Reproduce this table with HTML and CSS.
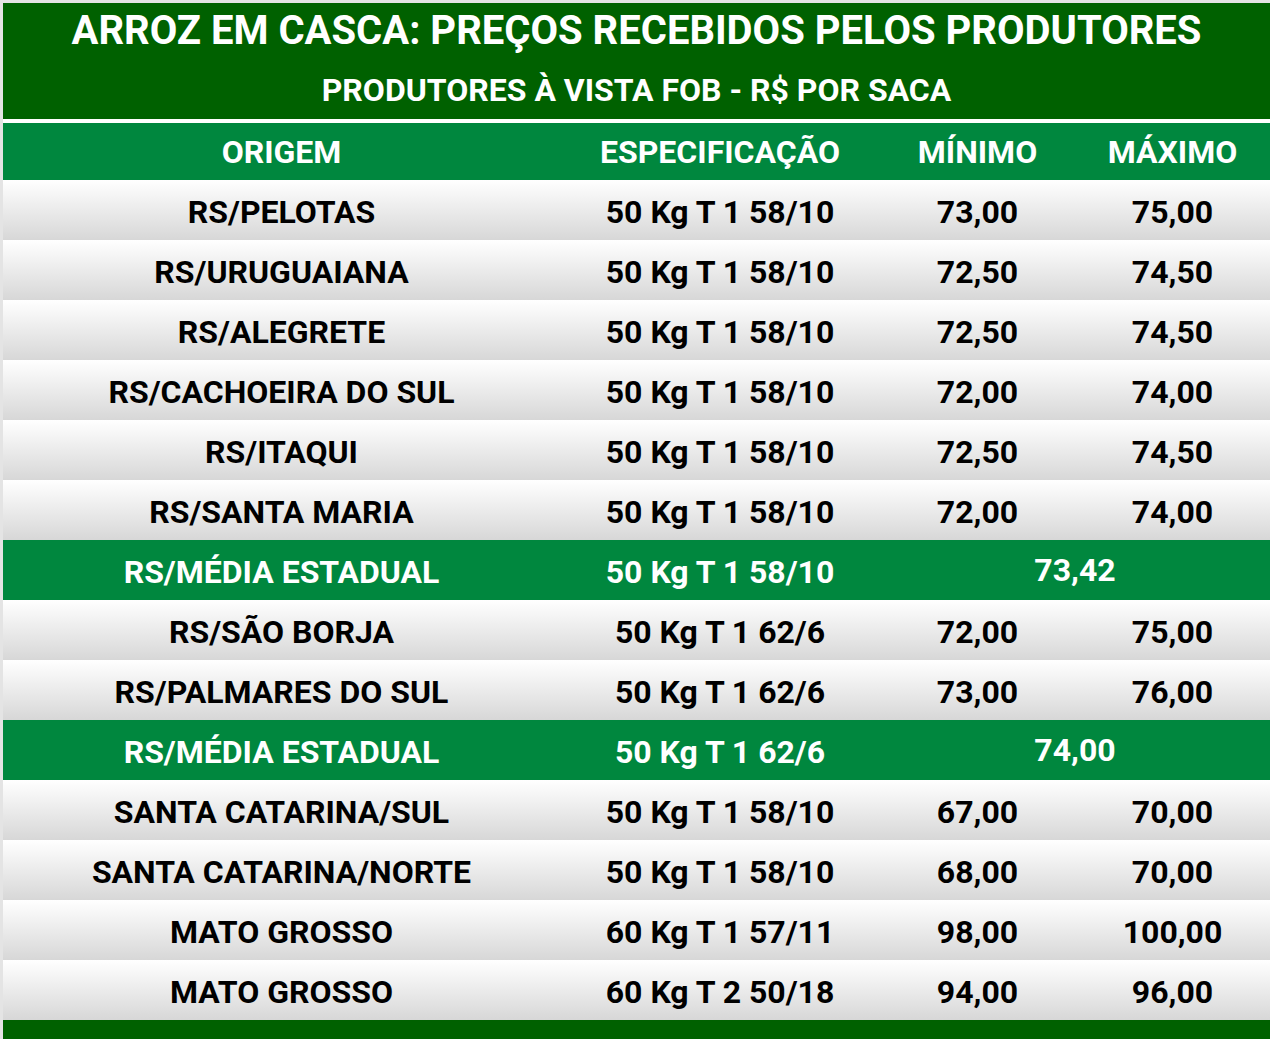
FILE: index.html
```html
<!DOCTYPE html>
<html lang="pt-BR">
<head>
<meta charset="utf-8">
<title>Arroz em casca: preços recebidos pelos produtores</title>
<link rel="stylesheet" href="styles.css">
</head>
<body>
<div class="sheet">
  <header class="banner">
    <h1 class="title">ARROZ EM CASCA: PREÇOS RECEBIDOS PELOS PRODUTORES</h1>
    <p class="subtitle">PRODUTORES À VISTA FOB - R$ POR SACA</p>
  </header>
  <div class="grid">
    <div class="cell head">ORIGEM</div>
    <div class="cell head">ESPECIFICAÇÃO</div>
    <div class="cell head">MÍNIMO</div>
    <div class="cell head">MÁXIMO</div>

    <div class="row"><div class="cell">RS/PELOTAS</div><div class="cell">50 Kg T 1 58/10</div><div class="cell">73,00</div><div class="cell">75,00</div></div>
    <div class="row"><div class="cell">RS/URUGUAIANA</div><div class="cell">50 Kg T 1 58/10</div><div class="cell">72,50</div><div class="cell">74,50</div></div>
    <div class="row"><div class="cell">RS/ALEGRETE</div><div class="cell">50 Kg T 1 58/10</div><div class="cell">72,50</div><div class="cell">74,50</div></div>
    <div class="row"><div class="cell">RS/CACHOEIRA DO SUL</div><div class="cell">50 Kg T 1 58/10</div><div class="cell">72,00</div><div class="cell">74,00</div></div>
    <div class="row"><div class="cell">RS/ITAQUI</div><div class="cell">50 Kg T 1 58/10</div><div class="cell">72,50</div><div class="cell">74,50</div></div>
    <div class="row"><div class="cell">RS/SANTA MARIA</div><div class="cell">50 Kg T 1 58/10</div><div class="cell">72,00</div><div class="cell">74,00</div></div>
    <div class="row avg"><div class="cell">RS/MÉDIA ESTADUAL</div><div class="cell">50 Kg T 1 58/10</div><div class="cell merged">73,42</div></div>
    <div class="row"><div class="cell">RS/SÃO BORJA</div><div class="cell">50 Kg T 1 62/6</div><div class="cell">72,00</div><div class="cell">75,00</div></div>
    <div class="row"><div class="cell">RS/PALMARES DO SUL</div><div class="cell">50 Kg T 1 62/6</div><div class="cell">73,00</div><div class="cell">76,00</div></div>
    <div class="row avg"><div class="cell">RS/MÉDIA ESTADUAL</div><div class="cell">50 Kg T 1 62/6</div><div class="cell merged">74,00</div></div>
    <div class="row"><div class="cell">SANTA CATARINA/SUL</div><div class="cell">50 Kg T 1 58/10</div><div class="cell">67,00</div><div class="cell">70,00</div></div>
    <div class="row"><div class="cell">SANTA CATARINA/NORTE</div><div class="cell">50 Kg T 1 58/10</div><div class="cell">68,00</div><div class="cell">70,00</div></div>
    <div class="row"><div class="cell">MATO GROSSO</div><div class="cell">60 Kg T 1 57/11</div><div class="cell">98,00</div><div class="cell">100,00</div></div>
    <div class="row"><div class="cell">MATO GROSSO</div><div class="cell">60 Kg T 2 50/18</div><div class="cell">94,00</div><div class="cell">96,00</div></div>
  </div>
  <footer class="footer"></footer>
</div>
</body>
</html>
```
FILE: styles.css
```css
html, body {
  margin: 0;
  padding: 0;
  background: #e4e4e4;
}

body {
  padding: 3px 0 0 3px;
  font-family: Roboto, "Liberation Sans", sans-serif;
  font-weight: 700;
}

.sheet {
  width: 1267px;
  background: #ffffff;
}

.banner {
  background: #006100;
  height: 116px;
  color: #ffffff;
  text-align: center;
  border-bottom: 4px solid #ffffff;
  box-sizing: content-box;
}

.title {
  margin: 0;
  padding-top: 5px;
  font-size: 40px;
  line-height: 46px;
  font-weight: 700;
}

.subtitle {
  margin: 0;
  padding-top: 18px;
  font-size: 32px;
  line-height: 36px;
}

.grid {
  display: grid;
  grid-template-columns: 557px 320px 195px 195px;
}

.row {
  display: contents;
}

.cell {
  height: 60px;
  display: flex;
  align-items: center;
  justify-content: center;
  font-size: 32px;
  color: #000000;
  padding-top: 4px;
  box-sizing: border-box;
  background: linear-gradient(#ffffff, #d7d7d7);
  white-space: nowrap;
}

.cell.head {
  height: 57px;
  background: #00873e;
  color: #ffffff;
  padding-top: 1px;
}

.avg .cell {
  background: #00873e;
  color: #ffffff;
}

.avg .cell.merged {
  grid-column: span 2;
  padding-top: 0;
}

.footer {
  height: 20px;
  background: #006100;
}
```
